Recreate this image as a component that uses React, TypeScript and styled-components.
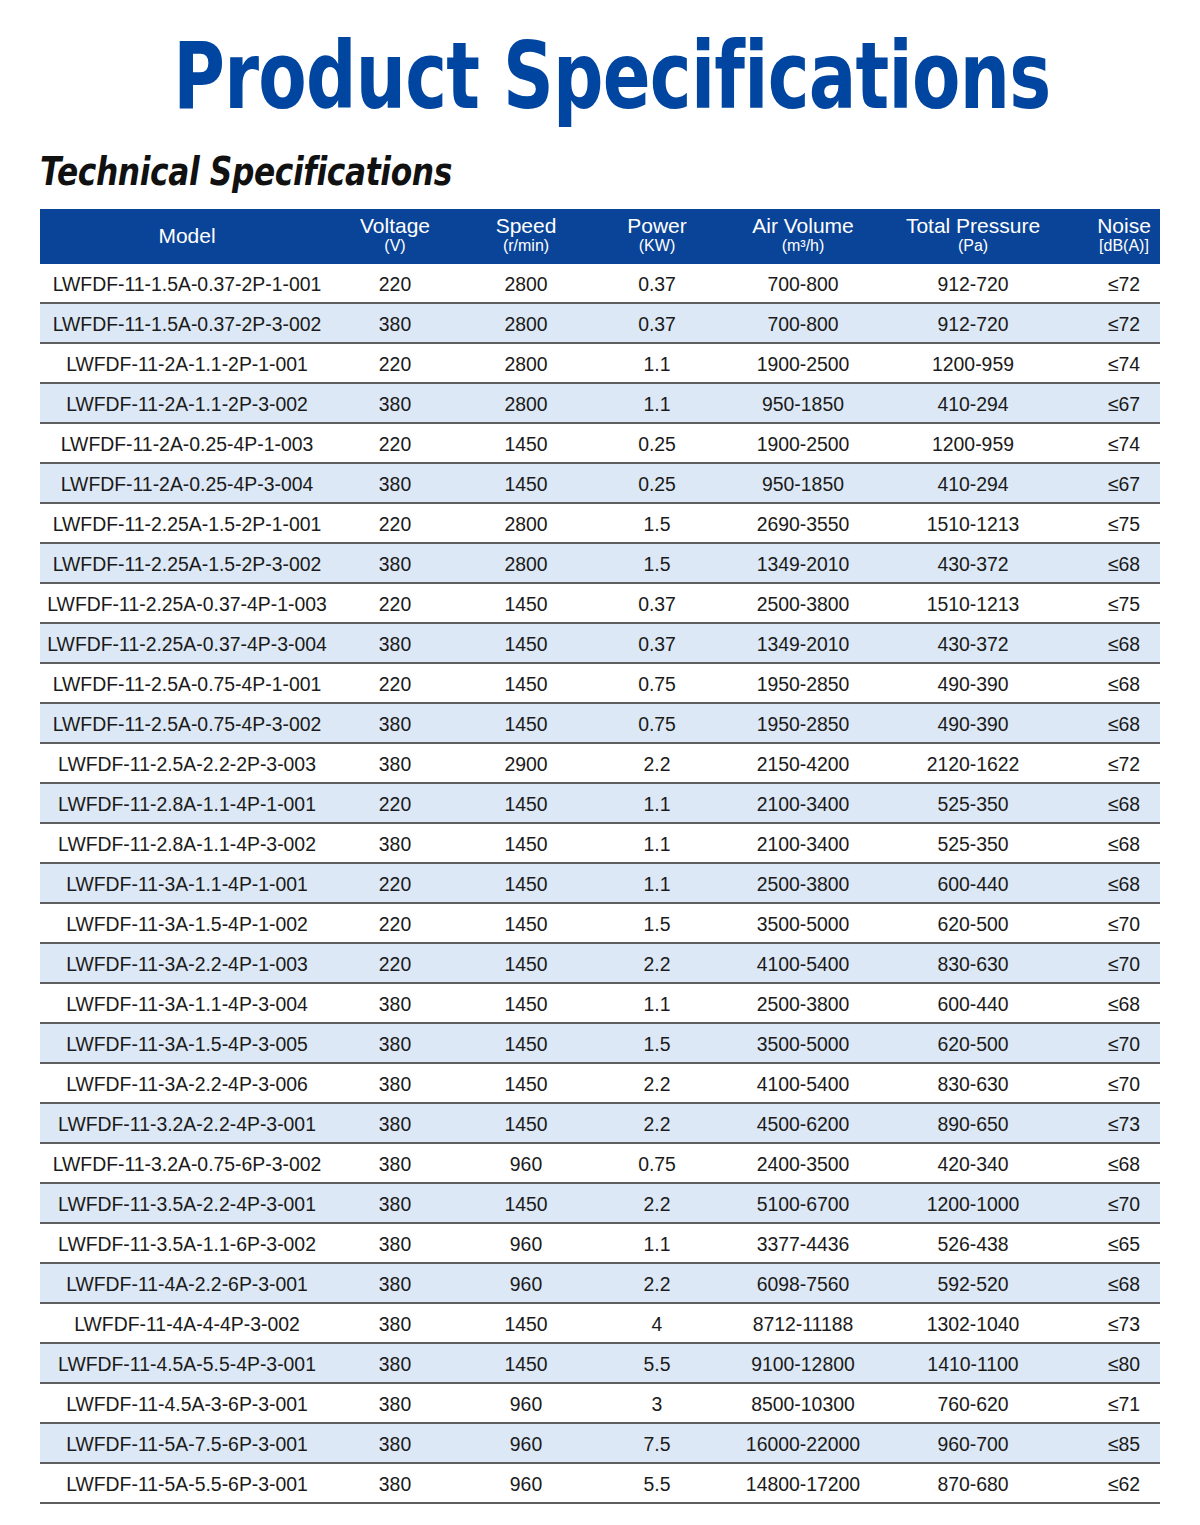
import styled, { createGlobalStyle } from "styled-components";

const GlobalStyle = createGlobalStyle`
  html, body {
    margin: 0;
    padding: 0;
    background: #fff;
  }
  body {
    font-family: "Liberation Sans", Arial, sans-serif;
  }
`;

interface Spec {
  model: string;
  voltage: string;
  speed: string;
  power: string;
  air: string;
  pressure: string;
  noise: string;
}

const rows: Spec[] = [
  ["LWFDF-11-1.5A-0.37-2P-1-001", "220", "2800", "0.37", "700-800", "912-720", "72"],
  ["LWFDF-11-1.5A-0.37-2P-3-002", "380", "2800", "0.37", "700-800", "912-720", "72"],
  ["LWFDF-11-2A-1.1-2P-1-001", "220", "2800", "1.1", "1900-2500", "1200-959", "74"],
  ["LWFDF-11-2A-1.1-2P-3-002", "380", "2800", "1.1", "950-1850", "410-294", "67"],
  ["LWFDF-11-2A-0.25-4P-1-003", "220", "1450", "0.25", "1900-2500", "1200-959", "74"],
  ["LWFDF-11-2A-0.25-4P-3-004", "380", "1450", "0.25", "950-1850", "410-294", "67"],
  ["LWFDF-11-2.25A-1.5-2P-1-001", "220", "2800", "1.5", "2690-3550", "1510-1213", "75"],
  ["LWFDF-11-2.25A-1.5-2P-3-002", "380", "2800", "1.5", "1349-2010", "430-372", "68"],
  ["LWFDF-11-2.25A-0.37-4P-1-003", "220", "1450", "0.37", "2500-3800", "1510-1213", "75"],
  ["LWFDF-11-2.25A-0.37-4P-3-004", "380", "1450", "0.37", "1349-2010", "430-372", "68"],
  ["LWFDF-11-2.5A-0.75-4P-1-001", "220", "1450", "0.75", "1950-2850", "490-390", "68"],
  ["LWFDF-11-2.5A-0.75-4P-3-002", "380", "1450", "0.75", "1950-2850", "490-390", "68"],
  ["LWFDF-11-2.5A-2.2-2P-3-003", "380", "2900", "2.2", "2150-4200", "2120-1622", "72"],
  ["LWFDF-11-2.8A-1.1-4P-1-001", "220", "1450", "1.1", "2100-3400", "525-350", "68"],
  ["LWFDF-11-2.8A-1.1-4P-3-002", "380", "1450", "1.1", "2100-3400", "525-350", "68"],
  ["LWFDF-11-3A-1.1-4P-1-001", "220", "1450", "1.1", "2500-3800", "600-440", "68"],
  ["LWFDF-11-3A-1.5-4P-1-002", "220", "1450", "1.5", "3500-5000", "620-500", "70"],
  ["LWFDF-11-3A-2.2-4P-1-003", "220", "1450", "2.2", "4100-5400", "830-630", "70"],
  ["LWFDF-11-3A-1.1-4P-3-004", "380", "1450", "1.1", "2500-3800", "600-440", "68"],
  ["LWFDF-11-3A-1.5-4P-3-005", "380", "1450", "1.5", "3500-5000", "620-500", "70"],
  ["LWFDF-11-3A-2.2-4P-3-006", "380", "1450", "2.2", "4100-5400", "830-630", "70"],
  ["LWFDF-11-3.2A-2.2-4P-3-001", "380", "1450", "2.2", "4500-6200", "890-650", "73"],
  ["LWFDF-11-3.2A-0.75-6P-3-002", "380", "960", "0.75", "2400-3500", "420-340", "68"],
  ["LWFDF-11-3.5A-2.2-4P-3-001", "380", "1450", "2.2", "5100-6700", "1200-1000", "70"],
  ["LWFDF-11-3.5A-1.1-6P-3-002", "380", "960", "1.1", "3377-4436", "526-438", "65"],
  ["LWFDF-11-4A-2.2-6P-3-001", "380", "960", "2.2", "6098-7560", "592-520", "68"],
  ["LWFDF-11-4A-4-4P-3-002", "380", "1450", "4", "8712-11188", "1302-1040", "73"],
  ["LWFDF-11-4.5A-5.5-4P-3-001", "380", "1450", "5.5", "9100-12800", "1410-1100", "80"],
  ["LWFDF-11-4.5A-3-6P-3-001", "380", "960", "3", "8500-10300", "760-620", "71"],
  ["LWFDF-11-5A-7.5-6P-3-001", "380", "960", "7.5", "16000-22000", "960-700", "85"],
  ["LWFDF-11-5A-5.5-6P-3-001", "380", "960", "5.5", "14800-17200", "870-680", "62"],
].map(([model, voltage, speed, power, air, pressure, noise]) => ({
  model,
  voltage,
  speed,
  power,
  air,
  pressure,
  noise: "≤" + noise,
}));

const columns = "294px 122px 140px 122px 170px 170px 102px";

const Page = styled.div`
  width: 1200px;
  padding: 22px 40px 0;
  box-sizing: border-box;
`;

const Title = styled.h1`
  margin: 0;
  text-align: center;
  font-family: "DejaVu Sans", sans-serif;
  font-weight: 700;
  font-size: 92px;
  line-height: 110px;
  color: #0046a1;
  letter-spacing: -1px;
`;

const Squeeze = styled.span<{ $x: number; $origin?: string }>`
  display: inline-block;
  white-space: nowrap;
  transform: scaleX(${(p) => p.$x});
  transform-origin: ${(p) => p.$origin ?? "center"};
`;

const Subtitle = styled.h2`
  margin: 15px 0 12px;
  font-family: "DejaVu Sans", sans-serif;
  font-style: italic;
  font-weight: 700;
  font-size: 39px;
  line-height: 50px;
  color: #111;
  letter-spacing: -0.5px;
`;

const Table = styled.div`
  width: 1120px;
`;

const HeaderRow = styled.div`
  display: grid;
  grid-template-columns: ${columns};
  height: 55px;
  background: #0a4498;
  color: #fff;
`;

const HeadCell = styled.div<{ $pad?: number }>`
  display: flex;
  flex-direction: column;
  align-items: center;
  justify-content: center;
  padding-left: ${(p) => p.$pad ?? 0}px;
  padding-bottom: 2px;
  font-size: 21px;
  line-height: 21px;
`;

const Unit = styled.span`
  font-size: 16px;
  line-height: 20px;
`;

const Row = styled.div<{ $alt: boolean }>`
  display: grid;
  grid-template-columns: ${columns};
  height: 40px;
  box-sizing: border-box;
  background: ${(p) => (p.$alt ? "#dce8f5" : "#fff")};
  border-bottom: 2px solid #5e5e5e;
  color: #1a1a1a;
  font-size: 19.4px;
`;

const Cell = styled.div<{ $pad?: number }>`
  display: flex;
  align-items: center;
  justify-content: center;
  padding-left: ${(p) => p.$pad ?? 0}px;
  padding-top: 2px;
  white-space: nowrap;
`;

const heads: [string, string | null][] = [
  ["Model", null],
  ["Voltage", "(V)"],
  ["Speed", "(r/min)"],
  ["Power", "(KW)"],
  ["Air Volume", "(m³/h)"],
  ["Total Pressure", "(Pa)"],
  ["Noise", "[dB(A)]"],
];

export default function App() {
  return (
    <>
      <GlobalStyle />
      <Page>
        <Title>
          <Squeeze $x={0.767}>Product Specifications</Squeeze>
        </Title>
        <Subtitle>
          <Squeeze $x={0.803} $origin="left">
            Technical Specifications
          </Squeeze>
        </Subtitle>
        <Table>
          <HeaderRow>
            {heads.map(([label, unit], i) => (
              <HeadCell key={label} $pad={i === 6 ? 30 : 0}>
                <span>{label}</span>
                {unit && <Unit>{unit}</Unit>}
              </HeadCell>
            ))}
          </HeaderRow>
          {rows.map((r, i) => (
            <Row key={r.model} $alt={i % 2 === 1}>
              <Cell>{r.model}</Cell>
              <Cell>{r.voltage}</Cell>
              <Cell>{r.speed}</Cell>
              <Cell>{r.power}</Cell>
              <Cell>{r.air}</Cell>
              <Cell>{r.pressure}</Cell>
              <Cell $pad={30}>{r.noise}</Cell>
            </Row>
          ))}
        </Table>
      </Page>
    </>
  );
}
